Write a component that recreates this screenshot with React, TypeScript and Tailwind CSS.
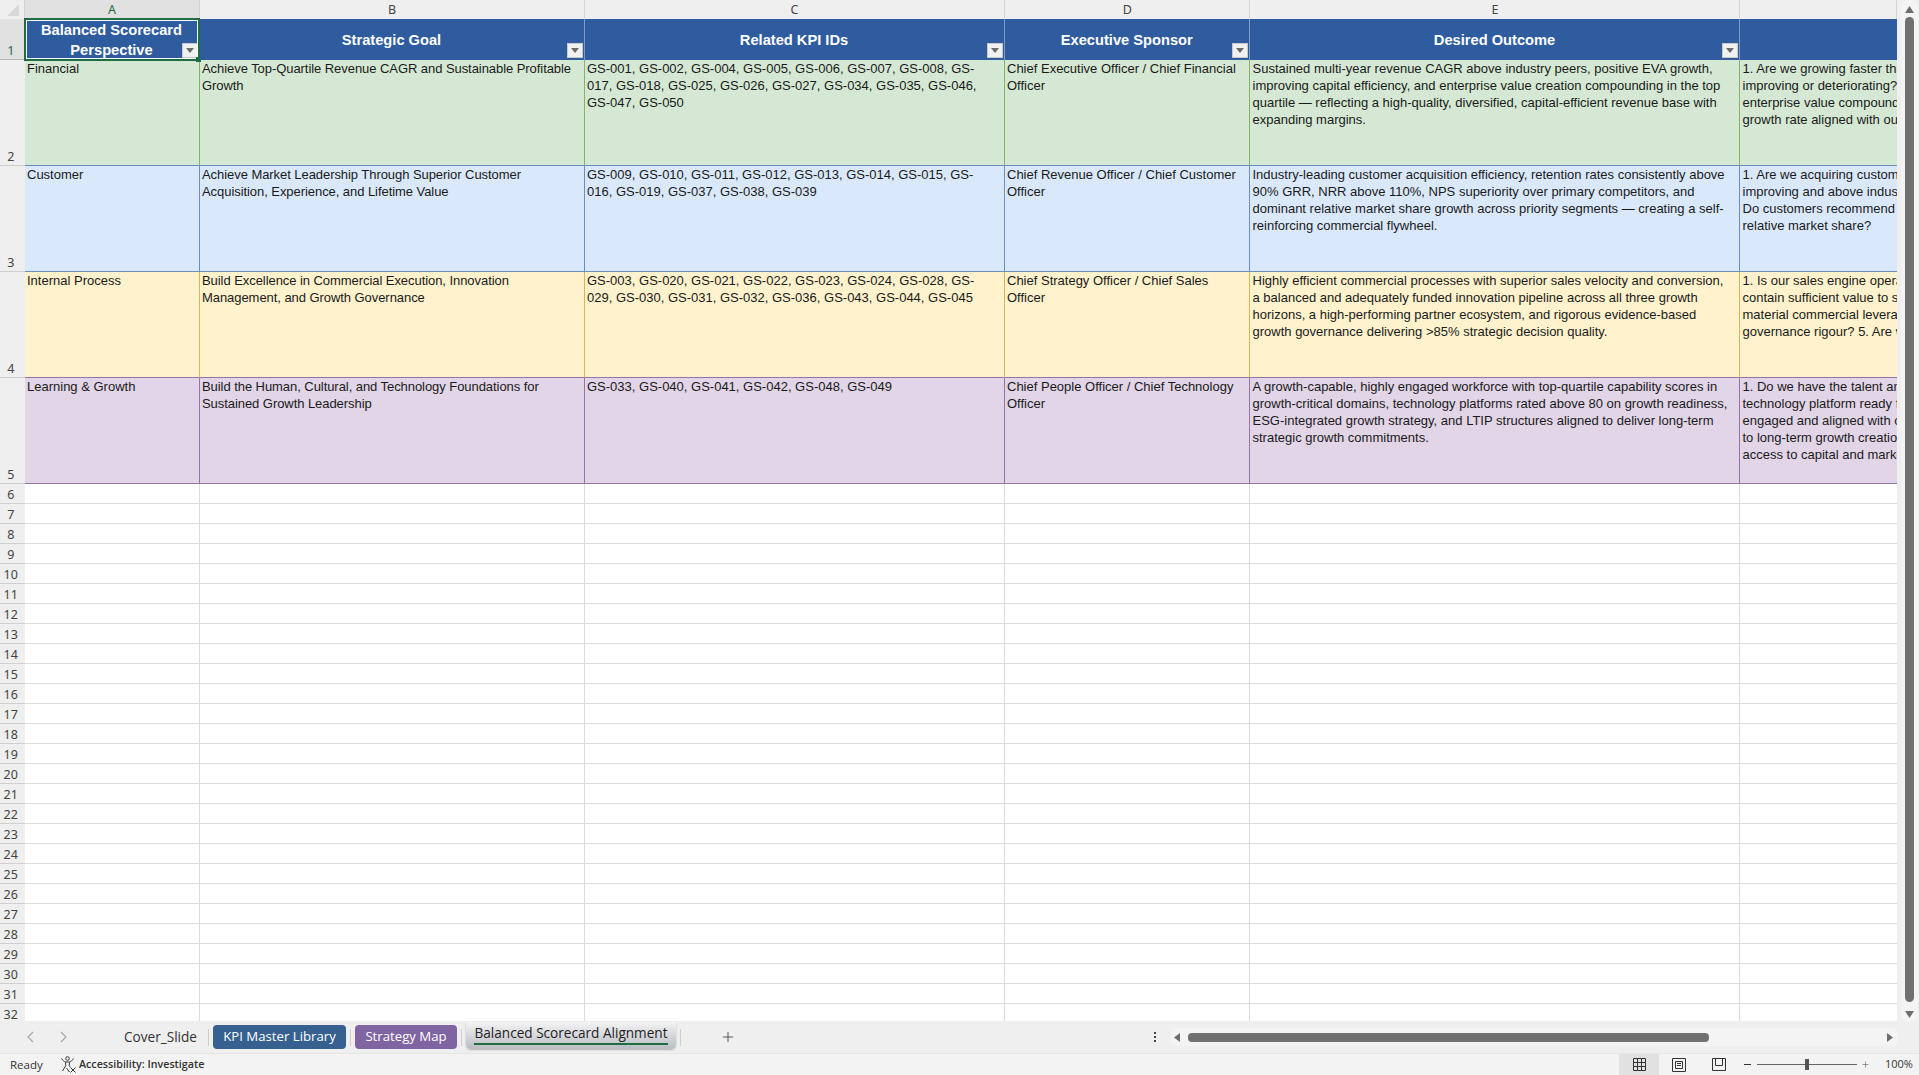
import { Plus } from "lucide-react";

const COLS = "grid grid-cols-[24.5px_175px_385px_420px_245.5px_490px_157px]";
const LETTERS = ["A", "B", "C", "D", "E", ""];
const HEADERS = [
  ["Balanced Scorecard", "Perspective"],
  ["Strategic Goal"],
  ["Related KPI IDs"],
  ["Executive Sponsor"],
  ["Desired Outcome"],
];

const ROWS = [
  {
    n: 2,
    tone: "bg-[#d5e8d4] border-r-[#82b366] border-b-[#6c8ebf]",
    cells: [
      ["Financial"],
      ["Achieve Top-Quartile Revenue CAGR and Sustainable Profitable", "Growth"],
      ["GS-001, GS-002, GS-004, GS-005, GS-006, GS-007, GS-008, GS-", "017, GS-018, GS-025, GS-026, GS-027, GS-034, GS-035, GS-046,", "GS-047, GS-050"],
      ["Chief Executive Officer / Chief Financial", "Officer"],
      ["Sustained multi-year revenue CAGR above industry peers, positive EVA growth,", "improving capital efficiency, and enterprise value creation compounding in the top", "quartile — reflecting a high-quality, diversified, capital-efficient revenue base with", "expanding margins."],
      ["1. Are we growing faster than", "improving or deteriorating?", "enterprise value compounding", "growth rate aligned with our"],
    ],
  },
  {
    n: 3,
    tone: "bg-[#dae8fc] border-r-[#6c8ebf] border-b-[#6c8ebf]",
    cells: [
      ["Customer"],
      ["Achieve Market Leadership Through Superior Customer", "Acquisition, Experience, and Lifetime Value"],
      ["GS-009, GS-010, GS-011, GS-012, GS-013, GS-014, GS-015, GS-", "016, GS-019, GS-037, GS-038, GS-039"],
      ["Chief Revenue Officer / Chief Customer", "Officer"],
      ["Industry-leading customer acquisition efficiency, retention rates consistently above", "90% GRR, NRR above 110%, NPS superiority over primary competitors, and", "dominant relative market share growth across priority segments — creating a self-", "reinforcing commercial flywheel."],
      ["1. Are we acquiring customers", "improving and above industry", "Do customers recommend", "relative market share?"],
    ],
  },
  {
    n: 4,
    tone: "bg-[#fff2cc] border-r-[#d6b656] border-b-[#9673a6]",
    cells: [
      ["Internal Process"],
      ["Build Excellence in Commercial Execution, Innovation", "Management, and Growth Governance"],
      ["GS-003, GS-020, GS-021, GS-022, GS-023, GS-024, GS-028, GS-", "029, GS-030, GS-031, GS-032, GS-036, GS-043, GS-044, GS-045"],
      ["Chief Strategy Officer / Chief Sales", "Officer"],
      ["Highly efficient commercial processes with superior sales velocity and conversion,", "a balanced and adequately funded innovation pipeline across all three growth", "horizons, a high-performing partner ecosystem, and rigorous evidence-based", "growth governance delivering >85% strategic decision quality."],
      ["1. Is our sales engine operating", "contain sufficient value to sustain", "material commercial leverage", "governance rigour? 5. Are we"],
    ],
  },
  {
    n: 5,
    tone: "bg-[#e1d5e7] border-r-[#9673a6] border-b-[#9673a6]",
    cells: [
      ["Learning & Growth"],
      ["Build the Human, Cultural, and Technology Foundations for", "Sustained Growth Leadership"],
      ["GS-033, GS-040, GS-041, GS-042, GS-048, GS-049"],
      ["Chief People Officer / Chief Technology", "Officer"],
      ["A growth-capable, highly engaged workforce with top-quartile capability scores in", "growth-critical domains, technology platforms rated above 80 on growth readiness,", "ESG-integrated growth strategy, and LTIP structures aligned to deliver long-term", "strategic growth commitments."],
      ["1. Do we have the talent and", "technology platform ready for", "engaged and aligned with our", "to long-term growth creation", "access to capital and markets"],
    ],
  },
];

const blankRows = Array.from({ length: 27 }, (_, i) => i + 6);

const FilterButton = () => (
  <div className="absolute right-[1px] bottom-[2px] w-[16px] h-[15px] bg-[#f1f1f1] border border-[#c9c9c9] flex items-center justify-center">
    <svg width="8" height="5" viewBox="0 0 8 5"><path d="M0 0h8L4 5z" fill="#6b6b6b" /></svg>
  </div>
);

const Grid = () => (
  <div className="flex-1 flex flex-col min-w-0 bg-white overflow-hidden">
    {/* column letters */}
    <div className={`${COLS} shrink-0 h-[19px] bg-[#efefef] text-[12.5px] text-[#444] font-['Noto_Sans',sans-serif]`}>
      <div className="flex items-end justify-end pr-[5px] pb-[4px] border-r border-[#d4d4d4]">
        <svg width="12" height="12" viewBox="0 0 12 12"><path d="M12 0v12H0z" fill="#d8d8d8" /></svg>
      </div>
      {LETTERS.map((l, i) => (
        <div
          key={i}
          className={`flex items-center justify-center pl-[1px] pt-[1px] border-r border-[#d4d4d4] ${i === 0 ? "bg-[#e1e1e1] text-[#1e6e42]" : ""}`}
        >
          {l}
        </div>
      ))}
    </div>

    {/* header row */}
    <div className={`${COLS} shrink-0 h-[40.5px] font-['Liberation_Sans',sans-serif]`}>
      <div className="bg-[#e1e1e1] text-[#1e6e42] text-[12.5px] leading-[17px] font-['Noto_Sans',sans-serif] flex items-end justify-center pr-[3px] border-b border-[#b5b5b5]">1</div>
      {HEADERS.map((h, i) => (
        <div key={i} className="relative bg-[#2e5c9e] border-r border-[#7d9bc6] text-white font-bold text-[14.67px] leading-[20px] pt-[1px] flex flex-col items-center justify-center">
          {h.map((line) => <div key={line} className="whitespace-nowrap">{line}</div>)}
          <FilterButton />
          {i === 0 && (
            <div className="absolute -left-[1px] -top-[1px] -right-[1px] -bottom-[1px] border-2 border-[#1e6e42]">
              <div className="w-full h-full border border-white" />
              <div className="absolute -right-[3px] -bottom-[3px] w-[5px] h-[5px] bg-[#1e6e42]" />
            </div>
          )}
        </div>
      ))}
      <div className="bg-[#2e5c9e]" />
    </div>

    {/* data rows */}
    {ROWS.map((r) => (
      <div key={r.n} className={`${COLS} shrink-0 h-[106px] text-[13px] leading-[17px] text-[#1a1a1a] font-['Liberation_Sans',sans-serif]`}>
        <div className="bg-[#efefef] text-[#444] text-[12.5px] leading-[17px] font-['Noto_Sans',sans-serif] flex items-end justify-center pr-[3px] border-b border-[#cfcfcf]">{r.n}</div>
        {r.cells.map((c, i) => (
          <div key={i} className={`${r.tone} border-b pl-[2.5px] overflow-hidden ${i === 5 ? "" : "border-r"} ${i === 1 ? "tracking-[-0.06px]" : ""}`}>
            {c.map((line) => <div key={line} className="whitespace-nowrap">{line}</div>)}
          </div>
        ))}
      </div>
    ))}

    {/* empty rows, the last one is cut by the tab bar */}
    {blankRows.map((n) => (
      <div key={n} className={`${COLS} shrink-0 h-[20px]`}>
        <div className="bg-[#efefef] text-[#444] text-[12.5px] leading-[17px] font-['Noto_Sans',sans-serif] flex items-end justify-center pr-[3px] border-b border-[#cfcfcf]">{n}</div>
        {[0, 1, 2, 3, 4].map((i) => <div key={i} className="border-r border-b border-[#dcdcdc]" />)}
        <div className="border-b border-[#dcdcdc]" />
      </div>
    ))}
  </div>
);

const VScrollbar = () => (
  <div className="w-[22px] bg-[#efefef] flex justify-center">
    <div className="w-[17px] ml-[2px] bg-[#f4f4f4] rounded-[6px] flex flex-col items-center pt-[6px] pb-[3px]">
      <svg width="9" height="7" viewBox="0 0 9 7"><path d="M4.5 0L9 7H0z" fill="#6e6e6e" /></svg>
      <div className="w-[9px] h-[985px] mt-[4px] rounded-[5px] bg-[#707070]" />
      <div className="flex-1" />
      <svg width="9" height="7" viewBox="0 0 9 7"><path d="M0 0h9L4.5 7z" fill="#6e6e6e" /></svg>
    </div>
  </div>
);

const Sep = () => <div className="w-px h-[17px] bg-[#cfcfcf]" />;

const Chevron = ({ d }: { d: string }) => (
  <svg width="8" height="12" viewBox="0 0 8 12" fill="none" stroke="#a3a3a3" strokeWidth="1.1"><path d={d} /></svg>
);

const TabBar = () => (
  <div className="h-[32px] bg-[#efefef] flex items-center font-['Open_Sans',sans-serif] text-[#333]">
    <div className="ml-[27px]"><Chevron d="M6 1L1 6l5 5" /></div>
    <div className="ml-[24px]"><Chevron d="M2 1l5 5-5 5" /></div>
    <div className="ml-[57px] w-[84px] whitespace-nowrap text-[13.6px]">Cover_Slide</div>
    <Sep />
    <div className="ml-[4px] w-[133px] h-[24px] rounded-[4px] bg-[#35608f] text-white flex items-center justify-center whitespace-nowrap text-[13.2px]">KPI Master Library</div>
    <div className="ml-[4px]"><Sep /></div>
    <div className="ml-[4px] w-[102px] h-[24px] rounded-[4px] bg-[#8064a2] text-white flex items-center justify-center whitespace-nowrap text-[13.2px]">Strategy Map</div>
    <div className="ml-[4px]"><Sep /></div>
    <div className="ml-[4px] self-start mt-[1px] w-[210px] h-[27px] rounded-b-[5px] bg-gradient-to-b from-[#f4f4f4] to-[#b9bcc2] shadow-[0_1px_2px_rgba(0,0,0,0.25)] flex flex-col items-center pt-[1px]">
      <div className="text-[13.6px] leading-[19px] whitespace-nowrap text-[#222]">Balanced Scorecard Alignment</div>
      <div className="w-[194px] h-[2px] bg-[#1e6e42] mt-[1px]" />
    </div>
    <div className="ml-[4px]"><Sep /></div>
    <Plus className="ml-[39px] text-[#333]" size={16} strokeWidth={1.2} />
    <div className="ml-[418px] flex flex-col gap-[2px]">
      <div className="w-[2px] h-[2px] bg-[#444]" />
      <div className="w-[2px] h-[2px] bg-[#444]" />
      <div className="w-[2px] h-[2px] bg-[#444]" />
    </div>
    {/* horizontal scrollbar */}
    <div className="ml-[15px] w-[727px] h-[18px] rounded-[6px] bg-[#f4f4f4] flex items-center pl-[3px] pr-[5px] gap-[8px]">
      <svg width="6" height="9" viewBox="0 0 6 9"><path d="M6 0v9L0 4.5z" fill="#6e6e6e" /></svg>
      <div className="w-[521px] h-[9px] rounded-[4px] bg-[#707070]" />
      <div className="flex-1" />
      <svg width="6" height="9" viewBox="0 0 6 9"><path d="M0 0v9l6-4.5z" fill="#6e6e6e" /></svg>
    </div>
  </div>
);

const AccessIcon = () => (
  <svg width="17" height="17" viewBox="0 0 17 17" fill="none" stroke="#333" strokeWidth="1">
    <circle cx="7.500" cy="2.500" r="1.800" />
    <path d="M1.500 2.500c1 2 3 3 3.500 3.500h5c.5-.5 2.500-1.500 3.500-3.500M5.500 6.500l.3 3L2.500 15M9.500 6.500l-.3 3 1 1.500" />
    <path d="M10.500 11.500l5 5M15.500 11.500l-5 5M6.500 12l3 4" />
  </svg>
);

const StatusBar = () => (
  <div className="h-[22px] bg-[#f3f3f3] border-t border-[#e6e6e6] flex items-center text-[#333] font-['Open_Sans',sans-serif]">
    <div className="ml-[10px] w-[50px] text-[11.5px]">Ready</div>
    <AccessIcon />
    <div className="ml-[2px] text-[10.7px] font-semibold whitespace-nowrap">Accessibility: Investigate</div>
    <div className="flex-1" />
    <div className="w-[40px] h-full bg-[#e1e1e1] flex items-center justify-center">
      <svg width="13" height="13" viewBox="0 0 13 13" fill="none" stroke="#333"><path d="M.5.5h12v12H.5zM.5 4.500h12M.5 8.500h12M4.500 .5v12M8.500 .5v12" /></svg>
    </div>
    <div className="w-[40px] flex items-center justify-center">
      <svg width="14" height="14" viewBox="0 0 14 14" fill="none" stroke="#333"><path d="M.5.5h13v13H.5zM3.500 3.500h7v7h-7zM5 5.500h4M5 7.500h4" /></svg>
    </div>
    <div className="w-[40px] flex items-center justify-center">
      <svg width="14" height="13" viewBox="0 0 14 13" fill="none" stroke="#333"><path d="M.5.5h13v12H.5zM3.500 .5v7h7v-7" /></svg>
    </div>
    <div className="ml-[5px] w-[7px] h-px bg-[#333]" />
    <div className="relative ml-[6px] w-[100px] h-px bg-[#666]">
      <div className="absolute left-[48px] -top-[5px] w-[4px] h-[11px] bg-[#555]" />
    </div>
    <Plus className="ml-[4px] text-[#555]" size={9} strokeWidth={1.5} />
    <div className="ml-[15px] w-[34px] text-[11px]">100%</div>
  </div>
);

export default function App() {
  return (
    <div className="w-[1919px] h-[1075px] flex flex-col overflow-hidden bg-[#efefef]">
      <div className="h-[1021px] shrink-0 flex">
        <Grid />
        <VScrollbar />
      </div>
      <TabBar />
      <StatusBar />
    </div>
  );
}
